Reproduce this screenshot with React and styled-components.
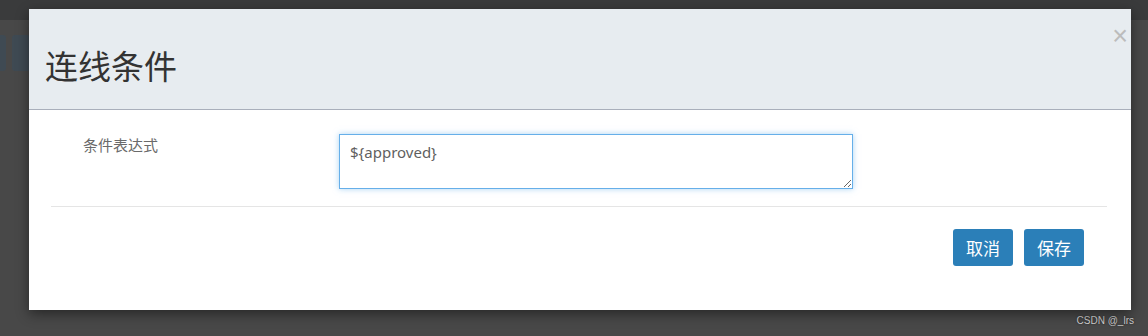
import React from "react";
import styled, { createGlobalStyle } from "styled-components";

const GlobalStyle = createGlobalStyle`
  html, body {
    margin: 0;
    padding: 0;
    background: #454545;
  }
  body {
    font-family: "Noto Sans", "Noto Sans CJK SC", sans-serif;
  }
`;

const Backdrop = styled.div`
  position: relative;
  width: 1148px;
  height: 336px;
  overflow: hidden;
  background: #484848;
`;

const TopBar = styled.div`
  height: 20px;
  background: #3a3b3c;
  display: flex;
  padding-left: 108px;
  align-items: flex-end;
`;

const MenuItem = styled.span`
  width: ${(p) => p.w}px;
  font-size: 14px;
  line-height: 14px;
  color: #565656;
  font-family: "Noto Sans CJK SC", sans-serif;
  margin-bottom: -4px;
`;

const Toolbar = styled.div`
  display: flex;
  gap: 6px;
  padding: 15px 0 0 0;
  margin-left: -12px;
`;

const ToolIcon = styled.div`
  width: 18px;
  height: 36px;
  border-radius: 3px;
  background: #3f4a53;
`;

const Watermark = styled.div`
  position: absolute;
  right: 14px;
  bottom: 10px;
  font-family: "Liberation Sans", sans-serif;
  font-size: 10px;
  color: #cfcfcf;
  text-shadow: 0 0 2px #222;
`;

const Modal = styled.div`
  position: absolute;
  left: 29px;
  top: 9px;
  width: 1102px;
  height: 301px;
  background: #fff;
  box-shadow: 0 4px 12px rgba(0, 0, 0, 0.45);
  display: flex;
  flex-direction: column;
`;

const Header = styled.div`
  position: relative;
  height: 101px;
  box-sizing: border-box;
  background: #e7ecf0;
  border-bottom: 1px solid #a9afbb;
  display: flex;
  align-items: center;
  padding: 11px 0 0 16px;
`;

const Title = styled.h4`
  margin: 0;
  font-family: "Noto Sans CJK SC", sans-serif;
  font-weight: 400;
  font-size: 33px;
  color: #333;
`;

const Close = styled.span`
  position: absolute;
  right: 3px;
  top: 14px;
  font-family: "Liberation Sans", sans-serif;
  font-size: 27px;
  color: #bcbcbc;
  line-height: 1;
`;

const Body = styled.div`
  padding: 24px 24px 0 22px;
`;

const FormRow = styled.div`
  display: flex;
  align-items: flex-start;
  padding-bottom: 17px;
  border-bottom: 1px solid #e5e5e5;
`;

const Label = styled.label`
  width: 288px;
  padding: 0 0 0 32px;
  box-sizing: border-box;
  font-family: "Noto Sans CJK SC", sans-serif;
  font-size: 15px;
  color: #6a6a6a;
`;

const Expr = styled.textarea`
  width: 514px;
  height: 55px;
  box-sizing: border-box;
  margin: 0;
  padding: 7px 10px;
  border: 1px solid #66afe9;
  border-radius: 0;
  outline: none;
  box-shadow: 0 0 6px rgba(102, 175, 233, 0.55);
  font-family: "Noto Sans", "Noto Sans CJK SC", sans-serif;
  font-size: 15px;
  line-height: 20px;
  color: #5f5f5f;
  resize: vertical;
`;

const Footer = styled.div`
  display: flex;
  justify-content: flex-end;
  gap: 11px;
  padding: 22px 23px 0 0;
`;

const Button = styled.button`
  width: 60px;
  height: 37px;
  border: none;
  border-radius: 3px;
  background: ${(p) => p.bg || "#2b7fb8"};
  color: #fff;
  font-family: "Noto Sans CJK SC", sans-serif;
  font-size: 17px;
  padding: 0;
`;

export default function App() {
  return (
    <>
      <GlobalStyle />
      <Backdrop>
        <TopBar>
          <MenuItem w={188}>流程</MenuItem>
          <MenuItem w={190}>案例模型</MenuItem>
          <MenuItem w={150}>决策</MenuItem>
          <MenuItem w={180}>表单</MenuItem>
          <MenuItem w={120}>应用程序</MenuItem>
        </TopBar>
        <Toolbar>
          <ToolIcon />
          <ToolIcon />
        </Toolbar>
        <Watermark>CSDN @_lrs</Watermark>
        <Modal>
          <Header>
            <Title>连线条件</Title>
            <Close>×</Close>
          </Header>
          <Body>
            <FormRow>
              <Label>条件表达式</Label>
              <Expr defaultValue="${approved}" />
            </FormRow>
            <Footer>
              <Button>取消</Button>
              <Button>保存</Button>
            </Footer>
          </Body>
        </Modal>
      </Backdrop>
    </>
  );
}
